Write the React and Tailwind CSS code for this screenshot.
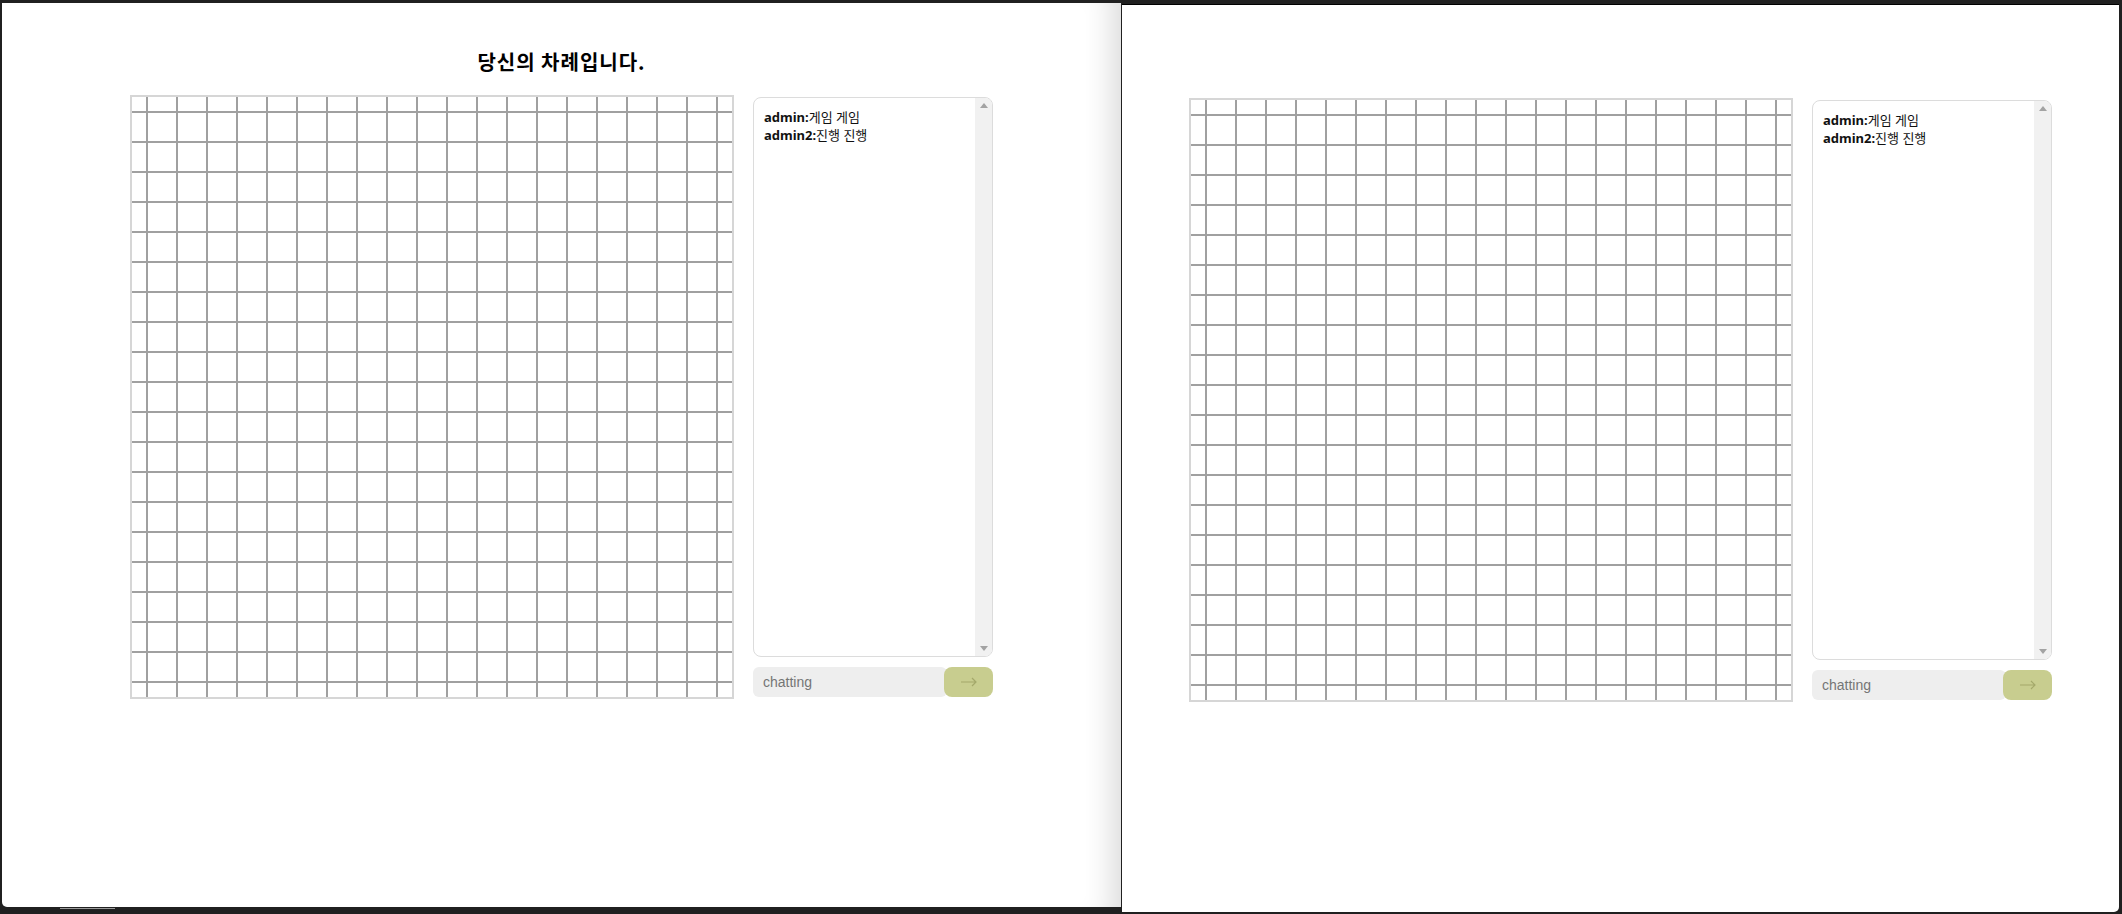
const SIZE = 20
const cells = Array.from({ length: SIZE * SIZE }, (_, i) => i)

function Board() {
  return (
    <div className="border-2 border-[#d6d6d6] bg-white">
      <div className="grid grid-cols-20 w-[600px] h-[600px]">
        {cells.map(i => (
          <div
            key={i}
            className="relative w-[30px] h-[30px] before:content-[''] before:absolute before:left-0 before:right-0 before:top-[14px] before:h-[2px] before:bg-[#a0a0a0] after:content-[''] after:absolute after:top-0 after:bottom-0 after:left-[14px] after:w-[2px] after:bg-[#a0a0a0]"
          />
        ))}
      </div>
    </div>
  )
}

function Chat({ messages }) {
  return (
    <div className="flex flex-col w-[240px] pt-[2px]">
      <div className="flex h-[560px] border border-[#dcdcdc] rounded-[8px] overflow-hidden bg-white">
        <div
          className="flex-1 px-[10px] pt-[10px] text-[13px] leading-[18px] text-[#111]"
          style={{ fontFamily: '"Noto Sans", "Noto Sans CJK KR", sans-serif' }}
        >
          {messages.map((m, i) => (
            <div key={i}>
              <span className="font-bold">{m.user}:</span>
              <span>{m.text}</span>
            </div>
          ))}
        </div>
        {/* scrollbar */}
        <div className="w-[17px] bg-[#f1f1f1] flex flex-col justify-between items-center py-[5px]">
          <svg width="8" height="5" viewBox="0 0 8 5"><path d="M0 5 L4 0 L8 5 Z" fill="#a3a3a3" /></svg>
          <svg width="8" height="5" viewBox="0 0 8 5"><path d="M0 0 L4 5 L8 0 Z" fill="#a3a3a3" /></svg>
        </div>
      </div>
      <div className="flex mt-[10px] h-[30px]">
        <input
          type="text"
          placeholder="chatting"
          className="flex-1 min-w-0 h-full bg-[#eeeeee] rounded-[6px] pl-[10px] text-[14px] outline-none placeholder:text-[#757575]"
          style={{ fontFamily: '"Liberation Sans", Arial, sans-serif' }}
        />
        <button className="-ml-[3px] w-[49px] h-full rounded-[8px] bg-[#c8cd8f] flex items-center justify-center">
          <svg width="16" height="10" viewBox="0 0 16 10" fill="none" stroke="#a4a86a" strokeWidth="1.2">
            <path d="M0 5 H15 M11 1 L15 5 L11 9" />
          </svg>
        </button>
      </div>
    </div>
  )
}

const messages = [
  { user: 'admin', text: '게임 게임' },
  { user: 'admin2', text: '진행 진행' },
]

function GameWindow({ title, className }) {
  return (
    <div className={`bg-white flex flex-col items-center ${className}`}>
      <div
        className="h-[30px] leading-[30px] text-[20px] font-bold text-black tracking-[1px]"
        style={{ fontFamily: '"Noto Sans CJK KR", "Noto Sans", sans-serif' }}
      >
        {title}
      </div>
      <div className="flex gap-[19px] mt-[18px]">
        <Board />
        <Chat messages={messages} />
      </div>
    </div>
  )
}

export default function App() {
  return (
    <div className="w-[2122px] h-[914px] bg-[#202020] flex overflow-hidden">
      <div className="flex flex-col pl-[2px] pt-[3px]">
        <GameWindow
          title="당신의 차례입니다."
          className="w-[1119px] h-[904px] pt-[44px] rounded-bl-[5px] shadow-[inset_-32px_0_28px_-22px_rgba(0,0,0,0.14)]"
        />
        <div className="ml-[58px] mt-[1px] w-[55px] h-[1px] bg-[#9a9a9a]" />
      </div>
      <div className="ml-[1px] pt-[4px] flex flex-col">
        <GameWindow
          title=""
          className="w-[997px] h-[908px] pt-[45px] border-t border-[#000] rounded-br-[5px]"
        />
      </div>
    </div>
  )
}
